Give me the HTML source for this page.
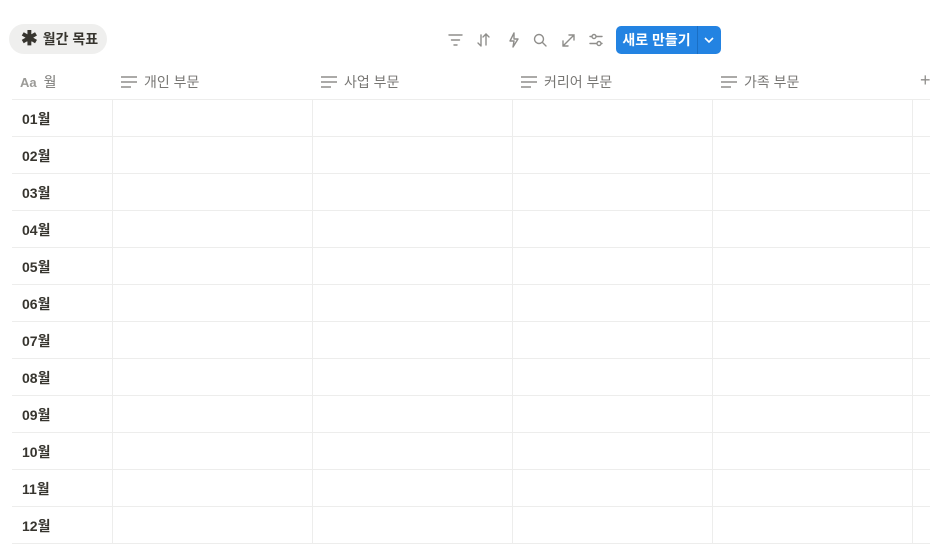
<!DOCTYPE html>
<html><head><meta charset="utf-8"><style>
*{margin:0;padding:0;box-sizing:border-box}
body{width:930px;height:557px;overflow:hidden;background:#fff;font-family:"Liberation Sans","Noto Sans CJK KR",sans-serif;position:relative;color:#37352f}
.a{position:absolute}
.hl{position:absolute;left:12px;right:0;height:1px;background:#ededec}
.vl{position:absolute;top:100px;height:443px;width:1px;background:#ededec}
.hd{position:absolute;top:72px;font-size:14px;color:#787774;display:flex;align-items:center;gap:7px}
.r{position:absolute;left:22px;font-size:14px;font-weight:600;color:#37352f}
</style></head><body>
<div class="a" style="left:9px;top:24px;width:98px;height:30px;border-radius:15px;background:#efefee;font-size:14px;font-weight:600;display:flex;align-items:center;padding-left:12px;gap:5px"><span style="font-size:20px;line-height:1">✱</span>월간 목표</div>
<svg class="a" style="left:448px;top:32px" width="160" height="16" fill="none" stroke="#8f8e8b" stroke-width="1.4" stroke-linecap="round">
<path d="M1 3h13M3.5 8h8M6 13h3"/>
<path d="M33 3v11M30 11l3 3M38 2v11M35 5l3-3 3 3"/>
<path d="M66 1l-4 8h4l-1 6 5-8h-4z" stroke-linejoin="round"/>
<circle cx="91" cy="7" r="4.5"/><path d="M94.5 10.5l3.5 3.5"/>
<path d="M115 14l11-11M121 3h5v5M115 9v5h5"/>
<path d="M142 4.5h12M142 11.5h12"/><circle cx="146" cy="4.5" r="2" fill="#fff"/><circle cx="151" cy="11.5" r="2" fill="#fff"/>
</svg>
<div class="a" style="left:616px;top:26px;width:105px;height:28px;border-radius:5px;background:#2383e2;color:#fff;font-size:14px;font-weight:700;display:flex;align-items:center">
<span style="width:81px;text-align:center">새로 만들기</span><span style="width:1px;height:28px;background:#1a6fc4"></span>
<svg width="23" height="28"><path d="M7 12l4 4 4-4" stroke="#fff" stroke-width="1.6" fill="none"/></svg></div>
<div class="hd" style="left:20px"><span style="font-size:13px;font-weight:600;color:#9b9a97">Aa</span>월</div>
<div class="hd" style="left:121px"><svg width="16" height="12" stroke="#8f8e8b" stroke-width="1.4"><path d="M0 1h16M0 6h16M0 11h10"/></svg>개인 부문</div>
<div class="hd" style="left:321px"><svg width="16" height="12" stroke="#8f8e8b" stroke-width="1.4"><path d="M0 1h16M0 6h16M0 11h10"/></svg>사업 부문</div>
<div class="hd" style="left:521px"><svg width="16" height="12" stroke="#8f8e8b" stroke-width="1.4"><path d="M0 1h16M0 6h16M0 11h10"/></svg>커리어 부문</div>
<div class="hd" style="left:721px"><svg width="16" height="12" stroke="#8f8e8b" stroke-width="1.4"><path d="M0 1h16M0 6h16M0 11h10"/></svg>가족 부문</div>
<div class="a" style="left:920px;top:70px;font-size:18px;color:#8f8e8b">+</div>
<div class="hl" style="top:99px"></div><div class="hl" style="top:136px"></div><div class="hl" style="top:173px"></div><div class="hl" style="top:210px"></div><div class="hl" style="top:247px"></div><div class="hl" style="top:284px"></div><div class="hl" style="top:321px"></div><div class="hl" style="top:358px"></div><div class="hl" style="top:395px"></div><div class="hl" style="top:432px"></div><div class="hl" style="top:469px"></div><div class="hl" style="top:506px"></div><div class="hl" style="top:543px"></div>
<div class="vl" style="left:112px"></div><div class="vl" style="left:312px"></div><div class="vl" style="left:512px"></div><div class="vl" style="left:712px"></div><div class="vl" style="left:912px"></div>
<div class="r" style="top:109px">01월</div><div class="r" style="top:146px">02월</div><div class="r" style="top:183px">03월</div><div class="r" style="top:220px">04월</div><div class="r" style="top:257px">05월</div><div class="r" style="top:294px">06월</div><div class="r" style="top:331px">07월</div><div class="r" style="top:368px">08월</div><div class="r" style="top:405px">09월</div><div class="r" style="top:442px">10월</div><div class="r" style="top:479px">11월</div><div class="r" style="top:516px">12월</div>
</body></html>
